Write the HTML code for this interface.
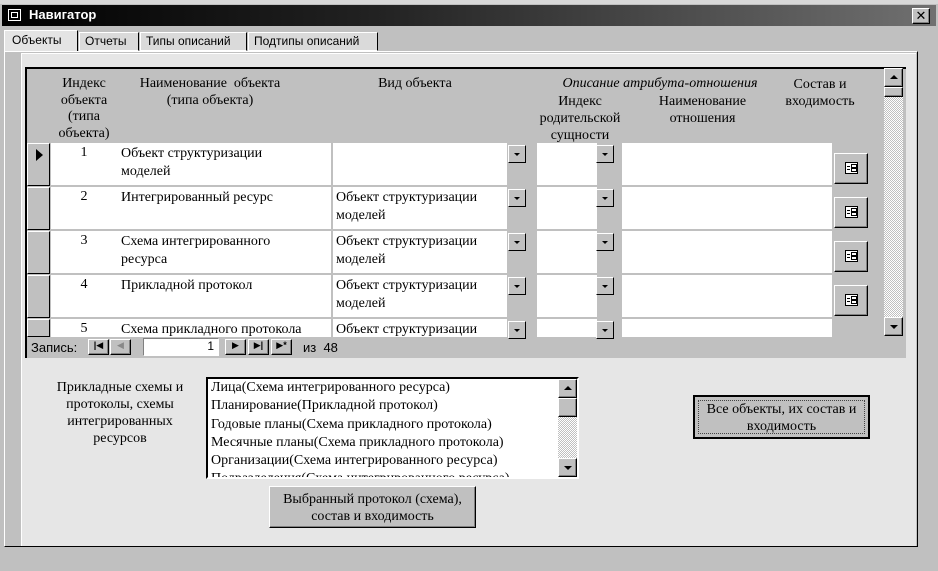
<!DOCTYPE html>
<html><head><meta charset="utf-8"><style>
*{margin:0;padding:0;box-sizing:border-box}
body{width:938px;height:571px;background:#c0c0c0;position:relative;overflow:hidden;font-family:"Liberation Serif","DejaVu Serif",serif;font-size:14px;color:#000}
.a{position:absolute}
.ss{font-family:"Liberation Sans","DejaVu Sans",sans-serif}
.w{background:#fff}
.btn{background:#c0c0c0;border:1px solid;border-color:#fff #000 #000 #fff;box-shadow:inset -1px -1px 0 #808080}
.dd{background:#c0c0c0;border:1px solid;border-color:#fff #000 #000 #fff;width:18px;height:18px}
.dd:after{content:"";position:absolute;left:5px;top:7px;border-left:3px solid transparent;border-right:3px solid transparent;border-top:3px solid #000}
.c{text-align:center}
</style></head><body>
<div class="a" style="left:0;top:0;width:938px;height:4px;background:#d8d8d8"></div>
<div class="a" style="left:2px;top:5px;width:934px;height:21px;background:linear-gradient(90deg,#000 0%,#222 40%,#707070 100%)"></div>
<div class="a" style="left:8px;top:9px;width:13px;height:12px;border:1px solid #fff;background:#000"><div class="a" style="left:2px;top:2px;width:7px;height:6px;border:1px solid #fff"></div></div>
<div class="a ss" style="left:29px;top:7px;color:#fff;font-weight:bold;font-size:13px">Навигатор</div>
<div class="a btn ss" style="left:912px;top:8px;width:18px;height:16px;font-size:13px;font-weight:bold;line-height:13px;text-align:center">✕</div>
<div class="a ss" style="left:4px;top:30px;width:74px;height:22px;background:#e4e4e4;border:1px solid;border-color:#fff #000 transparent #fff;font-size:12px;padding:2px 0 0 7px">Объекты</div>
<div class="a ss" style="left:79px;top:32px;width:60px;height:19px;background:#dadada;border:1px solid;border-color:#fff #000 #fff #fff;font-size:12px;padding:1px 0 0 5px">Отчеты</div>
<div class="a ss" style="left:140px;top:32px;width:107px;height:19px;background:#dadada;border:1px solid;border-color:#fff #000 #fff #fff;font-size:12px;padding:1px 0 0 5px">Типы описаний</div>
<div class="a ss" style="left:248px;top:32px;width:130px;height:19px;background:#dadada;border:1px solid;border-color:#fff #000 #fff #fff;font-size:12px;padding:1px 0 0 5px">Подтипы описаний</div>
<div class="a" style="left:4px;top:51px;width:914px;height:496px;background:#c0c0c0;border:1px solid;border-color:#fff #000 #000 #fff"></div>
<div class="a" style="left:21px;top:53px;width:895px;height:493px;background:#e6e6e6;border-left:1px solid #fff;border-top:1px solid #fff"></div>
<div class="a" style="left:25px;top:67px;width:881px;height:291px;background:#c0c0c0;border-top:2px solid #000;border-left:2px solid #000"></div>
<div class="a c" style="left:52px;top:76px;width:64px;line-height:16.5px">Индекс<br>объекта<br>(типа<br>объекта)</div>
<div class="a c" style="left:110px;top:76px;width:200px;line-height:16.5px">Наименование&nbsp; объекта<br>(типа объекта)</div>
<div class="a c" style="left:335px;top:76px;width:160px">Вид объекта</div>
<div class="a c" style="left:530px;top:76px;width:260px;font-style:italic">Описание атрибута-отношения</div>
<div class="a c" style="left:530px;top:93px;width:100px;line-height:17px">Индекс<br>родительской<br>сущности</div>
<div class="a c" style="left:630px;top:93px;width:145px;line-height:17px">Наименование<br>отношения</div>
<div class="a c" style="left:770px;top:76px;width:100px;line-height:17px">Состав и<br>входимость</div>
<div id="rows"></div>
<div class="a" style="left:884px;top:68px;width:19px;height:268px;background:repeating-conic-gradient(#fff 0 25%,#c0c0c0 0 50%) 0 0/2px 2px"></div>
<div class="a btn" style="left:884px;top:68px;width:19px;height:19px"><div class="a" style="left:5px;top:6px;border-left:4px solid transparent;border-right:4px solid transparent;border-bottom:4px solid #000"></div></div>
<div class="a btn" style="left:884px;top:87px;width:19px;height:10px"></div>
<div class="a btn" style="left:884px;top:317px;width:19px;height:19px"><div class="a" style="left:5px;top:7px;border-left:4px solid transparent;border-right:4px solid transparent;border-top:4px solid #000"></div></div>
<div class="a ss" style="left:31px;top:340px;font-size:13px">Запись:</div>
<div class="a btn ss" style="left:88px;top:339px;width:21px;height:16px;font-size:9px;text-align:center;font-weight:bold">|◀</div>
<div class="a btn ss" style="left:110px;top:339px;width:21px;height:16px;font-size:9px;text-align:center;color:#888">◀</div>
<div class="a w ss" style="left:143px;top:338px;width:76px;height:18px;border:1px solid;border-color:#808080 #fff #fff #808080;text-align:right;padding-right:4px;font-size:12px">1</div>
<div class="a btn ss" style="left:225px;top:339px;width:21px;height:16px;font-size:9px;text-align:center">▶</div>
<div class="a btn ss" style="left:248px;top:339px;width:21px;height:16px;font-size:9px;text-align:center;font-weight:bold">▶|</div>
<div class="a btn ss" style="left:271px;top:339px;width:21px;height:16px;font-size:9px;text-align:center;font-weight:bold">▶*</div>
<div class="a ss" style="left:303px;top:340px;font-size:13px">из&nbsp; 48</div>
<div class="a c" style="left:40px;top:379px;width:160px;line-height:17px">Прикладные схемы и<br>протоколы, схемы<br>интегрированных<br>ресурсов</div>
<div class="a w" style="left:206px;top:377px;width:373px;height:102px;border:2px solid;border-color:#000 #fff #fff #000;overflow:hidden;padding:0 0 0 3px;line-height:18.3px;font-size:14px;white-space:nowrap">Лица(Схема интегрированного ресурса)<br>Планирование(Прикладной протокол)<br>Годовые планы(Схема прикладного протокола)<br>Месячные планы(Схема прикладного протокола)<br>Организации(Схема интегрированного ресурса)<br>Подразделения(Схема интегрированного ресурса)</div>
<div class="a" style="left:558px;top:379px;width:19px;height:98px;background:repeating-conic-gradient(#fff 0 25%,#c0c0c0 0 50%) 0 0/2px 2px"></div>
<div class="a btn" style="left:558px;top:379px;width:19px;height:19px"><div class="a" style="left:5px;top:6px;border-left:4px solid transparent;border-right:4px solid transparent;border-bottom:4px solid #000"></div></div>
<div class="a btn" style="left:558px;top:398px;width:19px;height:19px"></div>
<div class="a btn" style="left:558px;top:458px;width:19px;height:19px"><div class="a" style="left:5px;top:7px;border-left:4px solid transparent;border-right:4px solid transparent;border-top:4px solid #000"></div></div>
<div class="a btn c" style="left:269px;top:486px;width:207px;height:42px;padding-top:4px;line-height:17px;font-size:14px">Выбранный протокол (схема),<br>состав и входимость</div>
<div class="a c" style="left:693px;top:395px;width:177px;height:44px;background:#c0c0c0;border:2px solid #000;padding-top:4px;line-height:17px;font-size:14px;white-space:nowrap"><div style="position:absolute;left:3px;top:3px;right:3px;bottom:3px;border:1px dotted #444"></div>Все объекты, их состав и<br>входимость</div>
<script>
var names=[["1","Объект структуризации<br>моделей",""],["2","Интегрированный ресурс","Объект структуризации<br>моделей"],["3","Схема интегрированного<br>ресурса","Объект структуризации<br>моделей"],["4","Прикладной протокол","Объект структуризации<br>моделей"],["5","Схема прикладного протокола","Объект структуризации"]];
var h="";
for(var i=0;i<5;i++){var t=143+i*44;var hh=i==4?18:42;
h+='<div class="a" style="left:27px;top:'+t+'px;width:23px;height:'+(i==4?18:43)+'px;background:#c0c0c0;border:1px solid;border-color:#fff #000 #000 #fff"></div>';
if(i==0)h+='<div class="a" style="left:36px;top:'+(t+6)+'px;border-top:6px solid transparent;border-bottom:6px solid transparent;border-left:7px solid #000"></div>';
h+='<div class="a w" style="left:51px;top:'+t+'px;width:280px;height:'+hh+'px"></div>';
h+='<div class="a c" style="left:54px;top:'+(t+2)+'px;width:60px">'+names[i][0]+'</div>';
h+='<div class="a" style="left:121px;top:'+(t+2)+'px;line-height:18px;white-space:nowrap;overflow:hidden;height:'+hh+'px">'+names[i][1]+'</div>';
h+='<div class="a w" style="left:333px;top:'+t+'px;width:174px;height:'+hh+'px"></div>';
h+='<div class="a" style="left:336px;top:'+(t+2)+'px;line-height:18px;white-space:nowrap;overflow:hidden;height:'+hh+'px;width:170px">'+names[i][2]+'</div>';
h+='<div class="a dd" style="left:508px;top:'+(t+2)+'px"></div>';
h+='<div class="a w" style="left:537px;top:'+t+'px;width:60px;height:'+hh+'px"></div>';
h+='<div class="a dd" style="left:596px;top:'+(t+2)+'px"></div>';
h+='<div class="a w" style="left:622px;top:'+t+'px;width:210px;height:'+hh+'px"></div>';
if(i<4)h+='<div class="a btn" style="left:834px;top:'+(t+10)+'px;width:34px;height:31px"><div class="a" style="left:10px;top:8px;width:13px;height:12px;border:1px solid #000;background:#fff"><div class="a" style="left:1px;top:3px;width:3px;height:1px;background:#000"></div><div class="a" style="left:1px;top:6px;width:3px;height:1px;background:#000"></div><div class="a" style="left:5px;top:1px;width:6px;height:4px;border:1px solid #000"></div><div class="a" style="left:5px;top:5px;width:6px;height:4px;border:1px solid #000"></div></div></div>';
}
document.getElementById("rows").outerHTML=h;
</script>
</body></html>
